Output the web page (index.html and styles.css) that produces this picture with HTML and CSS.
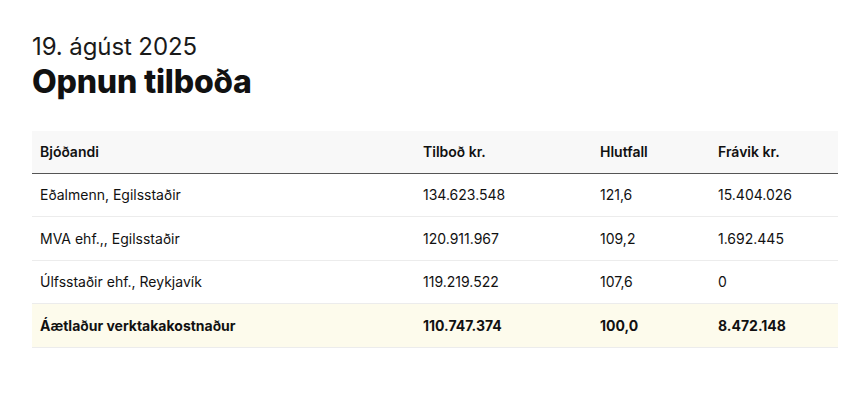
FILE: index.html
```html
<!DOCTYPE html>
<html lang="is">
<head>
<meta charset="utf-8">
<link rel="stylesheet" href="styles.css">
</head>
<body>
<main class="page">
  <p class="date">19. ágúst 2025</p>
  <h1 class="title">Opnun tilboða</h1>
  <table class="bids">
    <thead>
      <tr>
        <th class="c-name">Bjóðandi</th>
        <th class="c-bid">Tilboð kr.</th>
        <th class="c-pct">Hlutfall</th>
        <th class="c-dev">Frávik kr.</th>
      </tr>
    </thead>
    <tbody>
      <tr>
        <td>Eðalmenn, Egilsstaðir</td>
        <td>134.623.548</td>
        <td>121,6</td>
        <td>15.404.026</td>
      </tr>
      <tr>
        <td>MVA ehf.,, Egilsstaðir</td>
        <td>120.911.967</td>
        <td>109,2</td>
        <td>1.692.445</td>
      </tr>
      <tr>
        <td>Úlfsstaðir ehf., Reykjavík</td>
        <td>119.219.522</td>
        <td>107,6</td>
        <td>0</td>
      </tr>
      <tr class="estimate">
        <td>Áætlaður verktakakostnaður</td>
        <td>110.747.374</td>
        <td>100,0</td>
        <td>8.472.148</td>
      </tr>
    </tbody>
  </table>
</main>
</body>
</html>
```

FILE: styles.css
```css
* { box-sizing: border-box; }
html, body { margin: 0; padding: 0; background: #fff; }
body {
  font-family: Inter, "Noto Sans", "DejaVu Sans", sans-serif;
  color: #111;
}
.page {
  padding: 32px 16px 0 32px;
  width: 854px;
}
.date {
  margin: 0;
  font-size: 24px;
  line-height: 30px;
  font-weight: 400;
  letter-spacing: -0.1px;
  color: #1a1a1a;
}
.title {
  margin: 2px 0 0 0;
  font-size: 32px;
  line-height: 36px;
  font-weight: 800;
  letter-spacing: -0.2px;
  color: #111;
}
.bids {
  margin-top: 31px;
  width: 806px;
  border-collapse: collapse;
  font-size: 14px;
}
.bids th, .bids td {
  text-align: left;
  padding: 0 8px;
  vertical-align: middle;
}
.bids thead th {
  background: #f8f8f8;
  font-weight: 600;
  height: 42px;
  border-bottom: 1px solid #555;
}
.bids tbody td {
  border-bottom: 1px solid #ececec;
  height: 43.5px;
}
.c-name { width: 383px; }
.c-bid { width: 177px; }
.c-pct { width: 118px; }
.estimate td {
  background: #fdfbec;
  font-weight: 700;
}
```
